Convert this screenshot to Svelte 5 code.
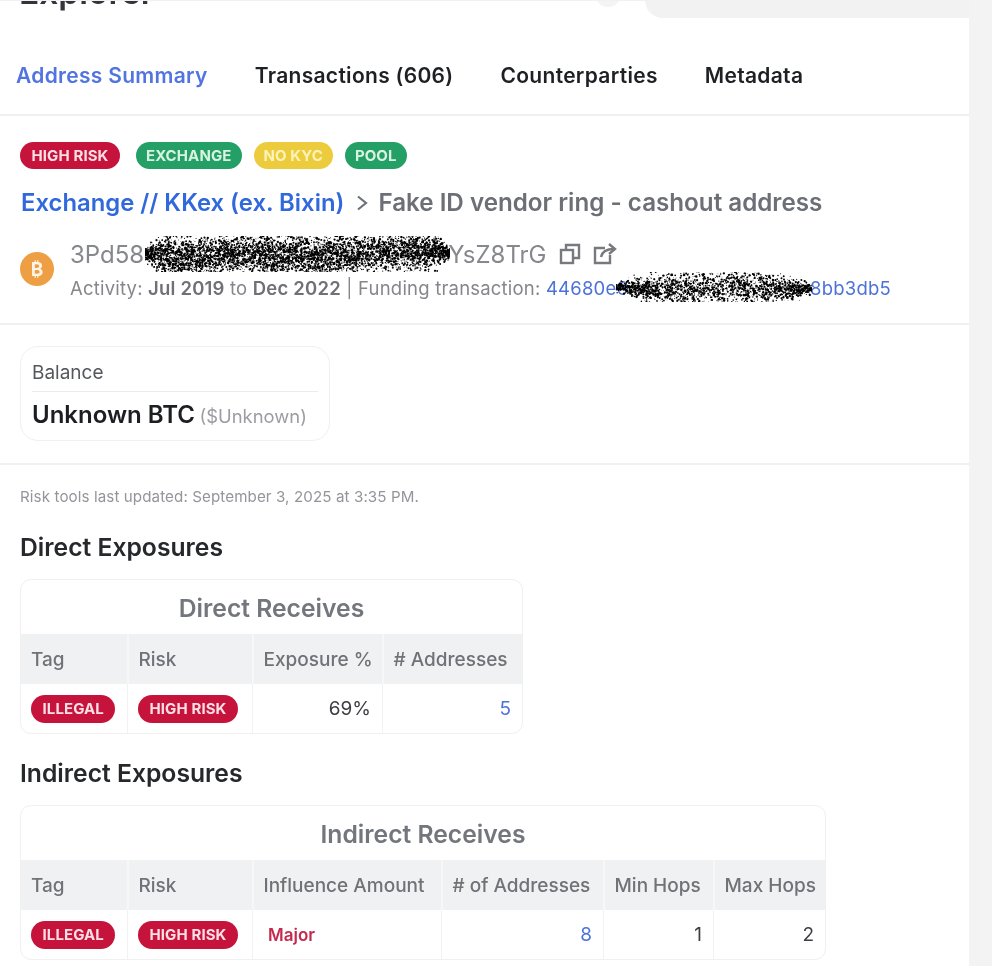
<script>
  function scribble(seed, w, h, n, edge) {
    let s = seed;
    const r = () => ((s = (s * 16807) % 2147483647) - 1) / 2147483646;
    const out = [];
    for (let i = 0; i < n; i++) {
      const x = r() * w;
      const taper = Math.min(1, Math.min(x, w - x) / edge + 0.25);
      const wave = Math.sin(x / 23) * 1.5 + Math.sin(x / 61) * 2;
      const sparse = i % 9 === 0;
      const spread = sparse ? r() - 0.5 : (r() + r() + r() + r()) / 4 - 0.5;
      const y = h / 2 + wave + spread * h * (sparse ? 0.95 : 1.9) * taper;
      out.push({ x: x.toFixed(1), y: y.toFixed(1), r: (sparse ? 0.3 + r() * 0.35 : 0.3 + r() * 0.9).toFixed(2) });
    }
    return out;
  }
  const big = scribble(12345, 305, 36, 5600, 30);
  const small = scribble(6789, 196, 30, 2100, 60);
</script>

<div class="shell">
  <main class="panel">
    <div class="top">
      <h1>Explorer</h1>
      <div class="blob"></div>
      <div class="search"></div>
    </div>

    <nav class="tabs">
      <span class="tab active">Address Summary</span>
      <span class="tab">Transactions (606)</span>
      <span class="tab">Counterparties</span>
      <span class="tab">Metadata</span>
    </nav>

    <section class="summary">
      <div class="tags">
        <span class="pill red wide">HIGH RISK</span>
        <span class="pill green">EXCHANGE</span>
        <span class="pill yellow">NO KYC</span>
        <span class="pill green">POOL</span>
      </div>
      <div class="title">
        <span class="entity">Exchange // KKex (ex. Bixin)</span>
        <svg class="chev" viewBox="0 0 12 18" width="12" height="18"><path d="M2 2.5 10 9l-8 6.5" fill="none" stroke="#6e7178" stroke-width="2.2"/></svg>
        <span class="name">Fake ID vendor ring - cashout address</span>
      </div>
      <div class="addr">
        <span class="coin">
          <svg viewBox="0 0 34 34" width="34" height="34">
            <circle cx="17" cy="17" r="17" fill="#ee9f43"/>
            <text x="17" y="23.5" text-anchor="middle" font-size="19" font-weight="700" font-family="Inter, sans-serif" fill="#fff5e6">₿</text>
          </svg>
        </span>
        <div class="addr-text">
          <div class="hash">
            <span class="hash-wrap">
              3Pd58<span class="gap-big"></span>YsZ8TrG
              <svg class="scrib" viewBox="0 0 305 36" width="305" height="36">
                {#each big as d}<circle cx={d.x} cy={d.y} r={d.r} fill="#000"/>{/each}
              </svg>
            </span>
            <svg class="ico" viewBox="0 0 22 22" width="22" height="22" fill="none" stroke="#77797e" stroke-width="2.4">
              <rect x="2" y="7" width="12" height="13"/>
              <path d="M7 7V2h13v13h-6"/>
            </svg>
            <svg class="ico" viewBox="0 0 24 22" width="24" height="22" fill="none" stroke="#77797e" stroke-width="2.4">
              <path d="M12 5H2v15h15v-8"/>
              <path d="M8 14C9 9 14 6 21 6"/>
              <path d="M16 1l6 5-6 5"/>
            </svg>
          </div>
          <div class="activity">
            Activity: <b>Jul 2019</b> to <b>Dec 2022</b> | Funding transaction:
            <span class="tx">44680e6<span class="gap-small"></span>8bb3db5
              <svg class="scrib2" viewBox="0 0 196 30" width="196" height="30">
                {#each small as d}<circle cx={d.x} cy={d.y} r={d.r} fill="#000"/>{/each}
              </svg>
            </span>
          </div>
        </div>
      </div>
    </section>

    <section class="balance-wrap">
      <div class="balance">
        <div class="bal-label">Balance</div>
        <div class="bal-value"><strong>Unknown BTC</strong> <span>($Unknown)</span></div>
      </div>
    </section>

    <section class="risk">
      <p class="updated">Risk tools last updated: September 3, 2025 at 3:35 PM.</p>

      <h2>Direct Exposures</h2>
      <div class="card direct">
        <div class="card-title">Direct Receives</div>
        <table>
          <thead>
            <tr><th class="w-tag">Tag</th><th class="w-risk">Risk</th><th class="w-exp">Exposure %</th><th># Addresses</th></tr>
          </thead>
          <tbody>
            <tr>
              <td><span class="pill red">ILLEGAL</span></td>
              <td><span class="pill red">HIGH RISK</span></td>
              <td class="num">69%</td>
              <td class="num link">5</td>
            </tr>
          </tbody>
        </table>
      </div>

      <h2 class="second">Indirect Exposures</h2>
      <div class="card indirect">
        <div class="card-title">Indirect Receives</div>
        <table>
          <thead>
            <tr><th class="w-tag">Tag</th><th class="w-risk">Risk</th><th class="w-inf">Influence Amount</th><th class="w-addr"># of Addresses</th><th class="w-hop">Min Hops</th><th>Max Hops</th></tr>
          </thead>
          <tbody>
            <tr>
              <td><span class="pill red">ILLEGAL</span></td>
              <td><span class="pill red">HIGH RISK</span></td>
              <td><span class="major">Major</span></td>
              <td class="num link">8</td>
              <td class="num">1</td>
              <td class="num">2</td>
            </tr>
          </tbody>
        </table>
      </div>
    </section>
  </main>
</div>

<style>
  :global(body) {
    margin: 0;
    background: #f3f3f3;
    font-family: Inter, "Liberation Sans", sans-serif;
  }
  .shell {
    width: 992px;
    height: 966px;
    overflow: hidden;
    background: #f3f3f3;
    filter: blur(0.6px);
  }
  .panel {
    width: 969px;
    height: 966px;
    background: #fff;
    overflow: hidden;
  }
  .top {
    height: 17px;
    position: relative;
    overflow: hidden;
    border-top: 1px solid #f1f1f1;
  }
  h1 {
    margin: -29px 0 0 19px;
    font-size: 33.5px;
    line-height: 40px;
    font-weight: 600;
    color: #33353a;
  }
  .search {
    position: absolute;
    left: 645px;
    top: -20px;
    right: 0;
    height: 37px;
    background: #f2f2f2;
    border-bottom-left-radius: 18px;
  }
  .blob {
    position: absolute;
    left: 595px;
    top: -20px;
    width: 26px;
    height: 26px;
    border-radius: 50%;
    background: #f4f4f4;
  }
  .tabs {
    display: flex;
    align-items: center;
    gap: 47px;
    height: 96px;
    box-sizing: content-box;
    padding: 0 0 0 16px;
    border-bottom: 2px solid #f0f0f0;
    font-size: 21px;
    font-weight: 600;
    color: #1e2024;
  }
  .tab { letter-spacing: 0.3px; position: relative; top: 9px; }
  .active { color: #5274e0; }
  .summary {
    height: 209px;
    box-sizing: border-box;
    padding: 26px 20px 0;
    border-bottom: 2px solid #f0f0f0;
  }
  .tags { display: flex; gap: 12px; }
  .pill {
    display: inline-block;
    height: 27px;
    line-height: 27px;
    padding: 0 10px;
    border-radius: 14px;
    font-size: 15px;
    font-weight: 700;
    letter-spacing: 0.1px;
    color: #fff;
    white-space: nowrap;
  }
  .wide { margin-right: 4px; padding: 0 11.5px; }
  td .pill { height: 28px; line-height: 28px; padding: 0 11.5px; vertical-align: middle; }
  .red { background: #c5133c; color: #fbdfe5; }
  .green { background: #24a066; color: #d9f2e2; }
  .yellow { background: #eccb3c; color: #fdf3b8; }
  .title {
    display: flex;
    align-items: center;
    margin-top: 18px;
    padding-left: 1px;
    font-size: 23.85px;
    font-weight: 600;
    line-height: 32px;
    white-space: nowrap;
  }
  .entity { color: #3168db; }
  .chev { margin: 0 10px 0 12px; }
  .name { color: #6c6f75; font-size: 24.2px; }
  .addr {
    display: flex;
    align-items: center;
    gap: 16px;
    margin-top: 19px;
    white-space: nowrap;
  }
  .coin { display: block; height: 34px; }
  .hash {
    display: flex;
    align-items: center;
    height: 32px;
    font-size: 24px;
    color: #86888d;
  }
  .hash-wrap { position: relative; display: inline-block; margin-right: 12px; }
  .gap-big { display: inline-block; width: 304px; }
  .gap-small { display: inline-block; width: 182px; }
  .scrib { position: absolute; left: 75px; top: -4px; }
  .scrib2 { position: absolute; left: 70px; top: -5px; }
  .ico { margin-right: 12px; }
  .activity {
    margin-top: 6px;
    font-size: 18.5px;
    letter-spacing: 0.2px;
    color: #85878c;
    line-height: 24px;
  }
  .activity b { font-weight: 600; color: #6f7176; }
  .tx { position: relative; color: #4d72d8; }
  .balance-wrap {
    height: 140px;
    box-sizing: border-box;
    padding: 21px 20px 0;
    border-bottom: 2px solid #f0f0f0;
  }
  .balance {
    width: 310px;
    height: 95px;
    box-sizing: border-box;
    border: 1.5px solid #f0f0f0;
    border-radius: 18px;
    padding: 12px 11px 0;
  }
  .bal-label {
    font-size: 19px;
    color: #55575c;
    line-height: 28px;
    padding-bottom: 4px;
    border-bottom: 1.5px solid #ececec;
  }
  .bal-value { margin-top: 7px; line-height: 32px; white-space: nowrap; }
  .bal-value strong { font-size: 24px; font-weight: 600; color: #1c1e22; }
  .bal-value span { font-size: 18.4px; color: #9b9da2; }
  .risk { padding: 22px 20px 0; }
  .updated {
    margin: 0;
    font-size: 15.15px;
    line-height: 20px;
    color: #93959a;
    letter-spacing: 0.1px;
  }
  h2 {
    margin: 25px 0 17px;
    font-size: 24.7px;
    line-height: 30px;
    font-weight: 600;
    color: #26282c;
  }
  h2.second { margin: 24px 0 17px; }
  .card {
    border: 1.5px solid #f0f0f0;
    border-radius: 11px;
    overflow: hidden;
    box-sizing: border-box;
  }
  .direct { width: 503px; }
  .indirect { width: 806px; }
  .card-title {
    height: 54px;
    line-height: 56px;
    text-align: center;
    font-size: 24.7px;
    font-weight: 600;
    color: #73767c;
  }
  table { width: 100%; border-collapse: collapse; table-layout: fixed; }
  th {
    height: 50px;
    padding: 0 11px 0 10px;
    background: #f0f1f3;
    text-align: left;
    font-size: 19px;
    font-weight: 500;
    color: #6f7277;
    border-right: 2px solid #f7f7f8;
    white-space: nowrap;
  }
  td {
    height: 49px;
    padding: 0 11px 0 10px;
    font-size: 19px;
    color: #3c3e43;
    border-right: 1.5px solid #f2f2f2;
  }
  th:last-child, td:last-child { border-right: 0; }
  .w-tag { width: 84.5px; }
  .w-risk { width: 102px; }
  .direct .w-exp { width: 107px; }
  .w-inf { width: 166px; }
  .w-addr { width: 139px; }
  .w-hop { width: 87px; }
  .num { text-align: right; }
  .link { color: #4d72d8; }
  .major { color: #c5294e; font-size: 17px; font-weight: 600; padding-left: 5px; }
</style>
